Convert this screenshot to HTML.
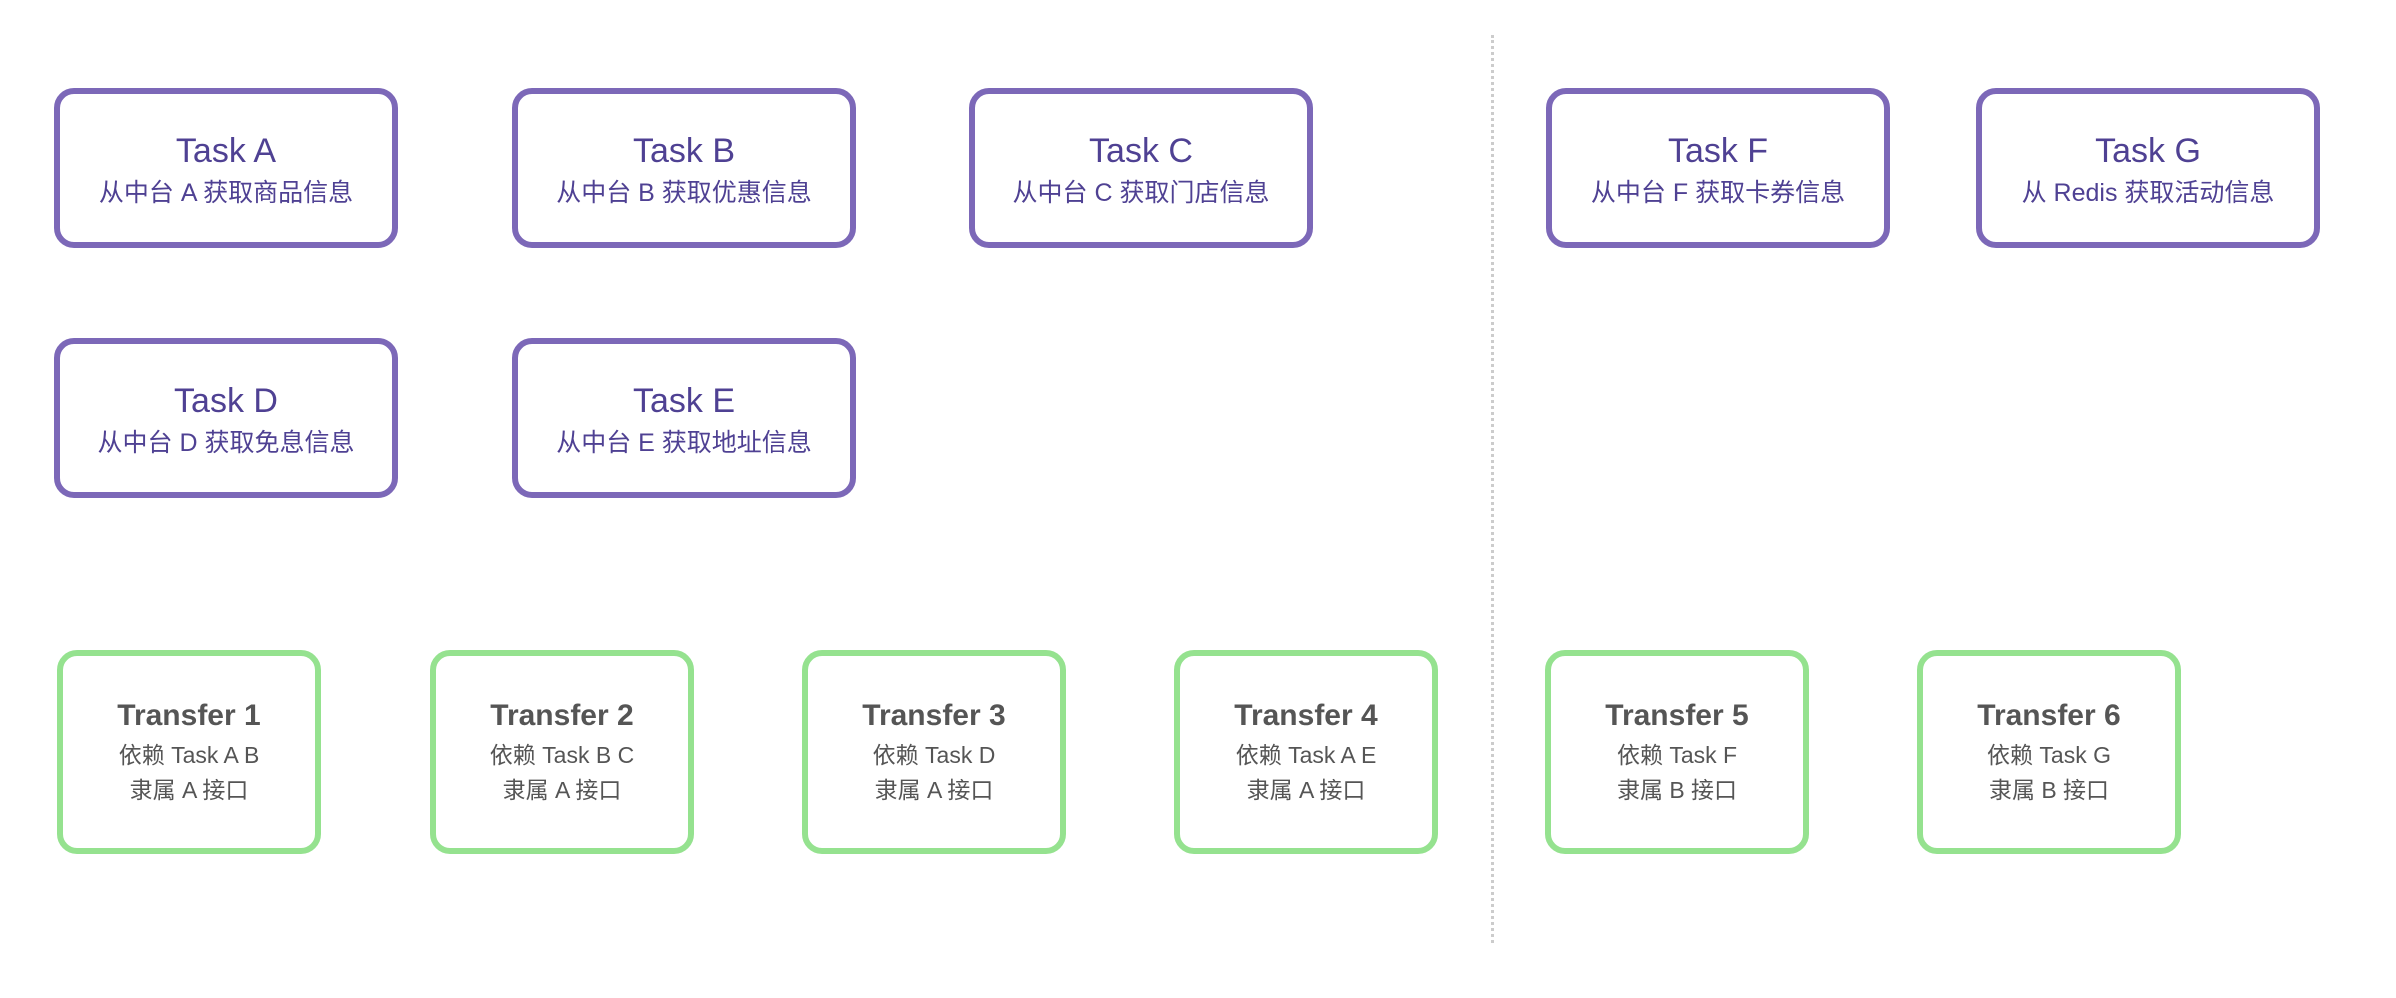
<!DOCTYPE html>
<html><head><meta charset="utf-8"><style>
html,body{margin:0;padding:0;background:#fff;width:2396px;height:998px;overflow:hidden;position:relative}
.b{position:absolute;box-sizing:border-box;border-radius:20px;display:flex;flex-direction:column;align-items:center;justify-content:center;text-align:center;font-family:"Liberation Sans","Noto Sans CJK SC",sans-serif}
.t{width:344px;height:160px;border:6px solid #7c68b8;color:#4f4193}
.t .h{font-size:34px;line-height:40px;margin-top:4px}
.t .s{font-size:25px;line-height:32px;margin-top:6px}
.g{width:264px;height:204px;border:6px solid #95e28f;color:#555}
.g .h{font-size:30px;font-weight:bold;line-height:38px;margin-bottom:3px}
.g .s{font-size:23px;line-height:35px}
.d{position:absolute;left:1491px;top:35px;height:908px;border-left:3px dotted #ccc}
</style></head><body>
<div class="d"></div>
<div class="b t" style="left:54px;top:88px"><div class="h">Task A</div><div class="s">从中台 A 获取商品信息</div></div>
<div class="b t" style="left:512px;top:88px"><div class="h">Task B</div><div class="s">从中台 B 获取优惠信息</div></div>
<div class="b t" style="left:969px;top:88px"><div class="h">Task C</div><div class="s">从中台 C 获取门店信息</div></div>
<div class="b t" style="left:1546px;top:88px"><div class="h">Task F</div><div class="s">从中台 F 获取卡券信息</div></div>
<div class="b t" style="left:1976px;top:88px"><div class="h">Task G</div><div class="s">从 Redis 获取活动信息</div></div>
<div class="b t" style="left:54px;top:338px"><div class="h">Task D</div><div class="s">从中台 D 获取免息信息</div></div>
<div class="b t" style="left:512px;top:338px"><div class="h">Task E</div><div class="s">从中台 E 获取地址信息</div></div>
<div class="b g" style="left:57px;top:650px"><div class="h">Transfer 1</div><div class="s">依赖 Task A B</div><div class="s">隶属 A 接口</div></div>
<div class="b g" style="left:430px;top:650px"><div class="h">Transfer 2</div><div class="s">依赖 Task B C</div><div class="s">隶属 A 接口</div></div>
<div class="b g" style="left:802px;top:650px"><div class="h">Transfer 3</div><div class="s">依赖 Task D</div><div class="s">隶属 A 接口</div></div>
<div class="b g" style="left:1174px;top:650px"><div class="h">Transfer 4</div><div class="s">依赖 Task A E</div><div class="s">隶属 A 接口</div></div>
<div class="b g" style="left:1545px;top:650px"><div class="h">Transfer 5</div><div class="s">依赖 Task F</div><div class="s">隶属 B 接口</div></div>
<div class="b g" style="left:1917px;top:650px"><div class="h">Transfer 6</div><div class="s">依赖 Task G</div><div class="s">隶属 B 接口</div></div>
</body></html>
